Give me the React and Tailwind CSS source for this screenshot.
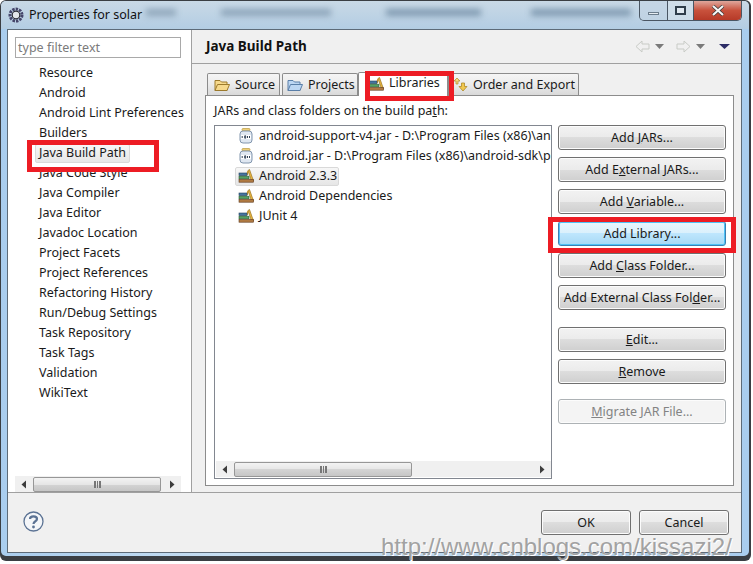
const font = { fontFamily: '"Noto Sans", sans-serif' };

const treeItems = [
  "Resource", "Android", "Android Lint Preferences", "Builders", "Java Build Path", "Java Code Style",
  "Java Compiler", "Java Editor", "Javadoc Location", "Project Facets", "Project References",
  "Refactoring History", "Run/Debug Settings", "Task Repository", "Task Tags", "Validation", "WikiText",
];

const BooksIcon = () => (
  <svg width="16" height="16" viewBox="0 0 16 16" className="shrink-0">
    <path d="M10 2.5 L11.5 1.5 L15.5 13 L13.5 13 Z" fill="#eeb93f" stroke="#97701c" strokeWidth="0.7" />
    <path d="M9 7 L10 3" stroke="#c9962a" strokeWidth="1.4" />
    <rect x="1" y="5" width="8" height="2.6" fill="#44749f" stroke="#27445f" strokeWidth="0.6" />
    <rect x="1" y="8.2" width="10" height="2.6" fill="#55a262" stroke="#2c5f35" strokeWidth="0.6" />
    <rect x="1" y="11.4" width="14.5" height="2.8" fill="#b07a42" stroke="#5f3a1e" strokeWidth="0.6" />
  </svg>
);

const JarIcon = () => (
  <svg width="14" height="16" viewBox="0 0 14 16" className="shrink-0">
    <rect x="3" y="0.5" width="8" height="2.5" rx="1" fill="#efcf78" stroke="#b89a44" strokeWidth="0.7" />
    <rect x="1" y="3" width="12" height="12" rx="3" fill="#dfe7f1" stroke="#8195ad" />
    <rect x="2" y="7" width="10" height="4" fill="#fff" />
    <path d="M3.2 8v2M5.7 7.8h1v2.4h-1zM8.5 8v2M10.5 8v2" stroke="#33445a" strokeWidth="1" fill="none" />
  </svg>
);

const FolderIcon = ({ body, edge }) => (
  <svg width="16" height="14" viewBox="0 0 16 14" className="shrink-0">
    <path d="M1 2.5 H6 L7.5 4 H13 V12.5 H1 Z" fill={body} stroke={edge} />
    <path d="M3.5 6.5 H15.5 L13 12.5 H1 Z" fill={body} stroke={edge} />
  </svg>
);

const SortIcon = () => (
  <svg width="15" height="15" viewBox="0 0 15 15" className="shrink-0">
    <path d="M4 1 L7 4 H5 V7 H3 V4 H1 Z" fill="#f4d77e" stroke="#b08a28" strokeWidth="0.7" />
    <path d="M10 14 L14 9.5 H11.5 V6 H8.5 V9.5 H6 Z" fill="#f1c84f" stroke="#b08a28" strokeWidth="0.8" />
  </svg>
);

const Tab = ({ icon, label, className, textClass = "pt-[1px]" }) => (
  <div className={`flex items-center gap-[5px] border border-b-0 border-[#8c8c8c] rounded-t-[2px] whitespace-nowrap ${className}`}>
    {icon}
    <span className={textClass}>{label}</span>
  </div>
);

const Button = ({ children, className = "", hot, disabled }) => (
  <div
    className={`flex items-center justify-center h-[25px] pt-[1px] rounded-[3px] border ${
      hot
        ? "border-[#3c7fb1] bg-[linear-gradient(#eaf6fd,#d9f0fc_50%,#bee6fd_50%,#a7d9f5)] shadow-[inset_0_0_0_1px_#4fc3f7]"
        : disabled
          ? "border-[#adb2b5] bg-[#f4f4f4] text-[#838383] shadow-[inset_0_0_0_1px_#fcfcfc]"
          : "border-[#707070] bg-[linear-gradient(#f2f2f2,#ebebeb_50%,#dddddd_50%,#cfcfcf)] shadow-[inset_0_0_0_1px_#fcfcfc]"
    } ${className}`}
  >
    <span>{children}</span>
  </div>
);

const Arrow = ({ dir }) => (
  <svg width="6" height="9" viewBox="0 0 6 9">
    <path d={dir === "left" ? "M5 0.5 V8.5 L0.5 4.5 Z" : "M1 0.5 V8.5 L5.5 4.5 Z"} fill="#3d3d3d" />
  </svg>
);

const Scrollbar = ({ thumbClass, className }) => (
  <div className={`flex items-center bg-[#f0f0f0] h-[16px] ${className}`}>
    <div className="w-[18px] flex justify-center shrink-0"><Arrow dir="left" /></div>
    <div className={`flex items-center justify-center h-[15px] border border-[#979797] rounded-[2px] bg-[linear-gradient(#f3f3f3,#e6e6e6_50%,#d4d4d4_50%,#c6c6c6)] ${thumbClass}`}>
      <div className="w-[7px] h-[7px] border-x-2 border-[#777] relative flex justify-center">
        <div className="w-[1px] h-full bg-[#777]"></div>
      </div>
    </div>
    <div className="flex-1"></div>
    <div className="w-[18px] flex justify-center shrink-0"><Arrow dir="right" /></div>
  </div>
);

const NavArrow = ({ flip }) => (
  <svg width="15" height="13" viewBox="0 0 15 13" className={flip ? "-scale-x-100" : ""}>
    <path d="M7 1 L1 6.5 L7 12 V9 H14 V4 H7 Z" fill="#f0f0f0" stroke="#c8cbc6" />
  </svg>
);

const Tri = ({ color = "#7a7a7a", wide }) => (
  <svg width={wide ? 11 : 9} height="5" viewBox={wide ? "0 0 11 5" : "0 0 9 5"}>
    <path d={wide ? "M0 0 H11 L5.5 5 Z" : "M0 0 H9 L4.5 5 Z"} fill={color} />
  </svg>
);

const RedBox = ({ className }) => (
  <div className={`absolute z-20 border-[5px] border-[#ed1c24] ${className}`}></div>
);

export default function App() {
  return (
    <div className="relative w-[753px] h-[564px] overflow-hidden bg-white text-[12.5px] text-[#1a1a1a]" style={font}>
      <div className="absolute left-0 top-0 w-[751px] h-[561px] rounded-[6px] bg-[#3a3e43]"></div>
      <div className="relative w-[748px] h-[555px] ml-[1px] mt-[1px] rounded-[5px] flex flex-col bg-[linear-gradient(90deg,#a9cdee,#c7dff3_30%,#b7d5ee_70%,#a9cdee)] overflow-hidden">
        <div className="relative h-[28px] flex items-center pl-[7px] shrink-0 bg-[linear-gradient(#c9d9e6,#b3cde3)]">
          <div className="absolute left-[145px] top-[8px] w-[30px] h-[7px] bg-[#8fa6ba] blur-[3px]"></div>
          <div className="absolute left-[220px] top-[8px] w-[110px] h-[7px] bg-[#8ca4b9] blur-[3px]"></div>
          <div className="absolute left-[385px] top-[8px] w-[95px] h-[7px] bg-[#7f99b0] blur-[3px]"></div>
          <div className="absolute left-[530px] top-[8px] w-[100px] h-[7px] bg-[#7f99b0] blur-[3px]"></div>
          <svg width="16" height="16" viewBox="0 0 16 16" className="shrink-0 relative">
            <circle cx="8" cy="8" r="6" fill="none" stroke="#45456a" strokeWidth="3" strokeDasharray="2.4 1" />
            <circle cx="8" cy="8" r="3.8" fill="#e4e7ea" stroke="#2b2b33" strokeWidth="1.2" />
          </svg>
          <span className="relative ml-[5px] mt-[1px] text-[#111]">Properties for solar</span>
          <div className="absolute right-[7px] top-0 flex h-[20px] rounded-b-[5px] border border-t-0 border-[#4a5663] overflow-hidden">
            <div className="w-[28px] flex items-center justify-center bg-[#c3d4e2]/60 border-r border-[#4a5663]">
              <div className="w-[11px] h-[3px] mt-[5px] bg-[#e6edf2] border border-[#6b7c8b]"></div>
            </div>
            <div className="w-[26px] flex items-center justify-center bg-[#d3e0ea]/70 border-r border-[#4a5663]">
              <div className="w-[11px] h-[9px] border-2 border-[#2f3d4a] bg-[#e0e9f0]"></div>
            </div>
            <div className="w-[47px] flex items-center justify-center bg-[linear-gradient(#dfa79c,#c8513c_50%,#b63a28)]">
              <svg width="14" height="11" viewBox="0 0 14 11">
                <path d="M2 1 L12 10 M12 1 L2 10" stroke="#3b3b3b" strokeWidth="3.6" />
                <path d="M2 1 L12 10 M12 1 L2 10" stroke="#f6f6f6" strokeWidth="2.2" />
              </svg>
            </div>
          </div>
        </div>

        <div className="ml-[6px] mr-[7px] h-[524px] border border-[#5d6b78] bg-[#f0f0f0] flex flex-col shrink-0">
          <div className="flex h-[463px] shrink-0 border-b border-[#a0a0a0]">
            <div className="w-[184px] shrink-0 bg-white border-r border-[#a0a0a0] flex flex-col pl-[7px] pr-[10px] pt-[7px]">
              <div className="h-[21px] shrink-0 border border-[#a9a9a9] flex items-center pl-[2px] pt-[1px] text-[#7b7b7b]">type filter text</div>
              <div className="flex-1 pt-[5px] flex flex-col">
                {treeItems.map((t) => (
                  <div key={t} className="h-[20px] flex items-center pl-[24px] shrink-0 whitespace-nowrap">
                    <span className={t === "Java Build Path" ? "-ml-[4px] px-[3px] h-[19px] w-[95px] flex items-center rounded-[2px] border border-[#d9d9d9] bg-[linear-gradient(#f7f7f7,#e6e6e6)]" : ""}>{t}</span>
                  </div>
                ))}
              </div>
              <Scrollbar thumbClass="w-[128px]" className="shrink-0" />
            </div>

            <div className="flex-1 flex flex-col">
              <div className="h-[34px] shrink-0 border-b border-[#a0a0a0] flex items-center justify-between pl-[14px] pr-[11px]">
                <span className="font-bold text-[13.5px] text-[#111]">Java Build Path</span>
                <div className="flex items-center gap-[5px]">
                  <NavArrow />
                  <Tri />
                  <div className="w-[2px]"></div>
                  <NavArrow flip />
                  <Tri />
                  <div className="w-[4px]"></div>
                  <Tri color="#2c2c66" wide />
                </div>
              </div>

              <div className="flex-1 pl-[13px] pr-[7px] pt-[8px] pb-[6px] flex flex-col">
                <div className="flex items-end h-[23px] shrink-0 pl-[2px] gap-[2px] relative z-10">
                  <Tab className="w-[73px] h-[22px] pl-[6px] bg-[linear-gradient(#f5f5f5,#ebebeb_50%,#d9d9d9)]" icon={<FolderIcon body="#f6d98c" edge="#9c7a2c" />} label="Source" />
                  <Tab className="w-[76px] h-[22px] pl-[4px] bg-[linear-gradient(#f5f5f5,#ebebeb_50%,#d9d9d9)]" icon={<FolderIcon body="#bcd6f2" edge="#5a7fa8" />} label="Projects" />
                  <Tab className="w-[90px] -ml-[2px] h-[24px] pl-[9px] bg-white pb-[2px] -mb-[1px]" textClass="" icon={<BooksIcon />} label="Libraries" />
                  <Tab className="w-[131px] h-[22px] -ml-[2px] pl-[4px] bg-[linear-gradient(#f5f5f5,#ebebeb_50%,#d9d9d9)]" icon={<SortIcon />} label="Order and Export" />
                </div>
                <div className="flex-1 bg-white border border-[#8c8c8c] pl-[8px] pr-[6px] flex flex-col">
                  <div className="h-[29px] shrink-0 flex items-center pt-[1px]">JARs and class folders on the build pa<u>t</u>h:</div>
                  <div className="flex gap-[6px]">
                    <div className="w-[338px] h-[354px] border border-[#828790] flex flex-col shrink-0 overflow-hidden">
                      <div className="flex-1 pl-[23px]">
                        {[
                          ["jar", "android-support-v4.jar - D:\\Program Files (x86)\\android-sdk\\platforms"],
                          ["jar", "android.jar - D:\\Program Files (x86)\\android-sdk\\platforms\\android"],
                          ["lib", "Android 2.3.3"],
                          ["lib", "Android Dependencies"],
                          ["lib", "JUnit 4"],
                        ].map(([kind, text]) => (
                          <div key={text} className="h-[20px] flex items-center whitespace-nowrap">
                            <div className={`flex items-center gap-[5px] ${text === "Android 2.3.3" ? "-ml-[3px] pl-[2px] w-[104px] h-[19px] rounded-[2px] border border-[#d9d9d9] bg-[linear-gradient(#f7f7f7,#e6e6e6)]" : ""}`}>
                              {kind === "jar" ? <div className="w-[16px] flex justify-center shrink-0"><JarIcon /></div> : <BooksIcon />}
                              <span>{text}</span>
                            </div>
                          </div>
                        ))}
                      </div>
                      <Scrollbar thumbClass="w-[178px]" className="shrink-0 mb-[1px] ml-[1px]" />
                    </div>
                    <div className="w-[168px] flex flex-col shrink-0">
                      <Button>Add <u>J</u>ARs...</Button>
                      <Button className="mt-[7px]">Add E<u>x</u>ternal JARs...</Button>
                      <Button className="mt-[7px]">Add <u>V</u>ariable...</Button>
                      <Button className="mt-[7px]" hot>Add Library...</Button>
                      <Button className="mt-[7px]">Add <u>C</u>lass Folder...</Button>
                      <Button className="mt-[7px]">Add External Class Fol<u>d</u>er...</Button>
                      <Button className="mt-[17px]"><u>E</u>dit...</Button>
                      <Button className="mt-[7px]"><u>R</u>emove</Button>
                      <Button className="mt-[15px]" disabled><u>M</u>igrate JAR File...</Button>
                    </div>
                  </div>
                </div>
              </div>
            </div>
          </div>

          <div className="flex-1 flex items-start justify-between pl-[15px] pr-[12px]">
            <svg width="21" height="21" viewBox="0 0 21 21" className="mt-[18px]">
              <circle cx="10.5" cy="10.5" r="9.5" fill="#f4f6f9" stroke="#5c7394" strokeWidth="1.3" />
              <path d="M7 8 C7 4.5 14 4.5 14 8 C14 10.5 10.5 10 10.5 13" fill="none" stroke="#5c7394" strokeWidth="2.2" />
              <circle cx="10.5" cy="16" r="1.4" fill="#5c7394" />
            </svg>
            <div className="flex gap-[8px] mt-[17px]">
              <Button className="w-[90px]">OK</Button>
              <Button className="w-[90px]">Cancel</Button>
            </div>
          </div>
        </div>
      </div>

      <RedBox className="left-[27px] top-[140px] w-[132px] h-[32px]" />
      <RedBox className="left-[365px] top-[71px] w-[89px] h-[30px]" />
      <RedBox className="left-[548px] top-[217px] w-[188px] h-[36px]" />
      <div className="absolute z-20 left-[381px] top-[532px] text-[24px] leading-[30px] text-[#a2a2a2] whitespace-nowrap [text-shadow:1px_1px_0_#fff]" style={{ fontFamily: '"Liberation Sans", sans-serif' }}>
        http://www.cnblogs.com/kissazi2/
      </div>
    </div>
  );
}
